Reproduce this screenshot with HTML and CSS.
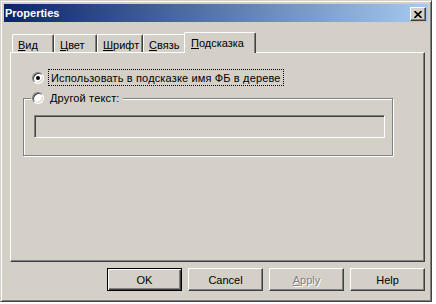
FILE: index.html
```html
<!DOCTYPE html>
<html>
<head>
<meta charset="utf-8">
<title>Properties</title>
<link rel="stylesheet" href="styles.css">
</head>
<body>
<div class="window">
  <div class="titlebar">
    <span class="title">Properties</span>
    <span class="close"><svg width="8" height="7" viewBox="0 0 8 7"><path d="M0.5 0 L7.5 7 M7.5 0 L0.5 7" stroke="#000" stroke-width="1.6" fill="none"/></svg></span>
  </div>
  <div class="body">
    <div class="tabs">
      <div class="tab tab-vid"><span class="u">В</span>ид</div>
      <div class="tab tab-color"><span class="u">Ц</span>вет</div>
      <div class="tab tab-font"><span class="u">Ш</span>рифт</div>
      <div class="tab tab-link"><span class="u">С</span>вязь</div>
      <div class="tab tab-hint selected"><span class="u">П</span>одсказка</div>
    </div>
    <div class="panel">
      <div class="radio-row">
        <span class="radio checked"></span>
        <span class="label focus">Использовать в подсказке имя ФБ в дереве</span>
      </div>
      <div class="group">
        <div class="legend">
          <span class="radio"></span>
          <span class="legend-text">Другой текст:</span>
        </div>
        <div class="edit"></div>
      </div>
    </div>
    <div class="buttons">
      <button class="btn default">OK</button>
      <button class="btn">Cancel</button>
      <button class="btn disabled"><span class="u">A</span>pply</button>
      <button class="btn">Help</button>
    </div>
  </div>
</div>
</body>
</html>
```
FILE: styles.css
```css
* { box-sizing: border-box; }
html, body { margin: 0; padding: 0; background: #fff; }
body {
  font-family: "Liberation Sans", Arial, sans-serif;
  font-size: 11px;
  color: #000;
}
.window {
  width: 432px;
  height: 302px;
  background: #d4d0c8;
  border: 1px solid;
  border-color: #d4d0c8 #404040 #404040 #d4d0c8;
  box-shadow: inset 1px 1px 0 #fff, inset -1px -1px 0 #808080;
  padding: 3px;
  display: flex;
  flex-direction: column;
}
.titlebar {
  height: 18px;
  display: flex;
  align-items: flex-start;
  background: linear-gradient(to right, #0a246a, #a6caf0);
  padding: 0 2px 0 1px;
}
.title {
  color: #fff;
  font-weight: bold;
  font-size: 11px;
  line-height: 18px;
}
.close {
  margin-left: auto;
  margin-top: 3px;
  width: 16px;
  height: 14px;
  background: #d4d0c8;
  border: 1px solid;
  border-color: #fff #404040 #404040 #fff;
  box-shadow: inset -1px -1px 0 #808080;
  display: flex;
  align-items: center;
  justify-content: center;
  padding-right: 1px;
}
.close svg { display: block; }
.body {
  flex: 1;
  padding: 10px 3px 0 6px;
  display: flex;
  flex-direction: column;
}
.u { text-decoration: underline; }
.tabs {
  display: flex;
  align-items: flex-end;
  height: 20px;
  padding-left: 2px;
}
.tab {
  height: 18px;
  padding: 4px 0 0 5px;
  line-height: 12px;
  white-space: nowrap;
  background: #d4d0c8;
  border-left: 1px solid #fff;
  border-top: 1px solid #fff;
  border-right: 1px solid #404040;
  border-radius: 2px 2px 0 0;
  box-shadow: inset -1px 0 0 #808080;
}
.tab-vid { width: 42px; }
.tab-color { width: 43px; }
.tab-font { width: 46px; }
.tab-link { width: 43px; }
.tab-hint { width: 67px; }
.tab.selected {
  position: relative;
  z-index: 1;
  width: 72px;
  height: 21px;
  margin: 0 -2px -1px -2px;
  padding: 4px 0 0 6px;
}
.panel {
  height: 210px;
  border: 1px solid;
  border-color: #fff #404040 #404040 #fff;
  box-shadow: inset -1px -1px 0 #808080;
  padding-top: 16px;
  display: flex;
  flex-direction: column;
  align-items: flex-start;
}
.radio-row {
  display: flex;
  align-items: center;
  height: 17px;
  margin-left: 21px;
}
.radio {
  width: 12px;
  height: 12px;
  border-radius: 50%;
  background: #fff;
  border: 1px solid;
  border-color: #808080 #fff #fff #808080;
  box-shadow: inset 1px 1px 0 #404040, inset -1px -1px 0 #d4d0c8;
  display: flex;
  align-items: center;
  justify-content: center;
  flex: none;
}
.radio.checked::after {
  content: "";
  width: 4px;
  height: 4px;
  border-radius: 50%;
  background: #000;
}
.label.focus {
  margin-left: 4px;
  border: 1px dotted #000;
  padding: 1px 2px 0 2px;
  line-height: 14px;
  letter-spacing: 0.15px;
  white-space: nowrap;
}
.group {
  margin-top: 12px;
  margin-left: 12px;
  width: 370px;
  height: 58px;
  border: 1px solid #808080;
  box-shadow: inset 1px 1px 0 #fff, 1px 1px 0 #fff;
  display: flex;
  flex-direction: column;
  align-items: flex-start;
}
.legend {
  display: flex;
  align-items: center;
  height: 16px;
  margin-top: -9px;
  margin-left: 7px;
  padding: 0 3px 0 1px;
  background: #d4d0c8;
}
.legend-text {
  margin-left: 6px;
  white-space: nowrap;
  letter-spacing: 0.15px;
}
.edit {
  margin: 9px 0 0 10px;
  width: 351px;
  height: 23px;
  border: 1px solid;
  border-color: #808080 #fff #fff #808080;
  box-shadow: inset 1px 1px 0 #404040, inset -1px -1px 0 #d4d0c8;
  background: #d4d0c8;
}
.buttons {
  display: flex;
  justify-content: flex-end;
  gap: 6px;
  margin-top: 6px;
}
.btn {
  width: 75px;
  height: 23px;
  padding: 0;
  font-family: inherit;
  font-size: 11px;
  color: #000;
  background: #d4d0c8;
  border: 1px solid;
  border-color: #fff #404040 #404040 #fff;
  box-shadow: inset -1px -1px 0 #808080;
  border-radius: 0;
}
.btn.default {
  border: 1px solid #000;
  box-shadow: inset 1px 1px 0 #fff, inset -1px -1px 0 #404040, inset -2px -2px 0 #808080;
}
.btn.disabled {
  color: #808080;
  text-shadow: 1px 1px 0 #fff;
}
```
